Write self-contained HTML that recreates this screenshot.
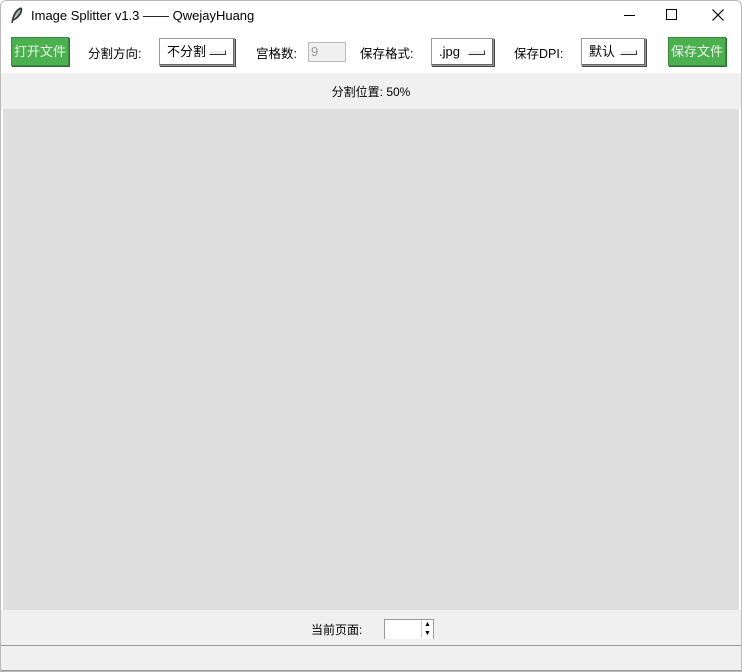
<!DOCTYPE html>
<html><head><meta charset="utf-8"><style>
*{margin:0;padding:0;box-sizing:border-box}
body{width:742px;height:672px;overflow:hidden;background:#fff;font-family:"Liberation Sans","Noto Sans CJK SC",sans-serif;font-size:12px;color:#000;position:relative}
.a{position:absolute}
.btn{position:absolute;background:#4caf50;color:#e8f5e8;border:1px solid #3b8a3e;box-shadow:1px 1px 0 #2d6d30;font-size:13px;text-align:center;line-height:27px}
.opt{position:absolute;background:#fff;border:1px solid #999;box-shadow:inset -1px -1px 0 #666,1px 1px 0 #444;font-size:13px;line-height:26px;padding-left:7px}
.opt i{position:absolute;right:8px;top:11px;width:17px;height:5px;border:1px solid #333;border-top-color:#fff;border-left-color:#fff;background:#eee}
.l{position:absolute;top:43px;font-size:12.5px}
</style></head><body>
<div class="a" style="left:0;top:0;width:742px;height:672px;border:1px solid #bbb;border-radius:6px 6px 0 0;pointer-events:none;z-index:5"></div>
<svg class="a" style="left:10px;top:7px" width="14" height="18" viewBox="0 0 14 18"><path d="M11 1 C6 3 3 9 2 16 M11 1 C13 5 8 11 3 13" stroke="#333" stroke-width="1.6" fill="#8aa"/></svg>
<div class="a" style="left:31px;top:8px;font-size:13px">Image Splitter v1.3 —— QwejayHuang</div>
<div class="a" style="left:624px;top:15px;width:11px;height:1px;background:#000"></div>
<div class="a" style="left:666px;top:9px;width:11px;height:11px;border:1px solid #000"></div>
<svg class="a" style="left:712px;top:9px" width="12" height="12"><path d="M0.5 0.5L11.5 11.5M11.5 0.5L0.5 11.5" stroke="#000" stroke-width="1.2"/></svg>
<div class="btn" style="left:11px;top:37px;width:58px;height:29px">打开文件</div>
<div class="l" style="left:88px">分割方向:</div>
<div class="opt" style="left:159px;top:38px;width:76px;height:28px">不分割<i></i></div>
<div class="l" style="left:256px">宫格数:</div>
<div class="a" style="left:308px;top:42px;width:38px;height:20px;border:1px solid #bbb;background:#f0f0f0;color:#999;padding-left:2px;line-height:18px;font-size:13px">9</div>
<div class="l" style="left:360px">保存格式:</div>
<div class="opt" style="left:431px;top:38px;width:63px;height:28px">.jpg<i></i></div>
<div class="l" style="left:514px">保存DPI:</div>
<div class="opt" style="left:581px;top:38px;width:65px;height:28px">默认<i></i></div>
<div class="btn" style="left:668px;top:37px;width:58px;height:29px">保存文件</div>
<div class="a" style="left:1px;top:73px;width:740px;height:36px;background:#f0f0f0"></div>
<div class="a" style="left:0;top:83px;width:742px;text-align:center;font-size:12px">分割位置: 50%</div>
<div class="a" style="left:3px;top:109px;width:736px;height:501px;background:#dfdfdf"></div>
<div class="a" style="left:1px;top:610px;width:740px;height:62px;background:#f0f0f0"></div>
<div class="a" style="left:311px;top:621px;font-size:12px">当前页面:</div>
<div class="a" style="left:384px;top:619px;width:50px;height:20px;background:#fff;border:1px solid #999;border-bottom:none"></div>
<div class="a" style="left:421px;top:620px;width:12px;height:18px;border-left:1px solid #ccc;font-size:7px;line-height:9px;text-align:center">▲<br>▼</div>
<div class="a" style="left:1px;top:645px;width:740px;height:1px;background:#999"></div>
<div class="a" style="left:1px;top:670px;width:740px;height:1px;background:#999"></div>
</body></html>
